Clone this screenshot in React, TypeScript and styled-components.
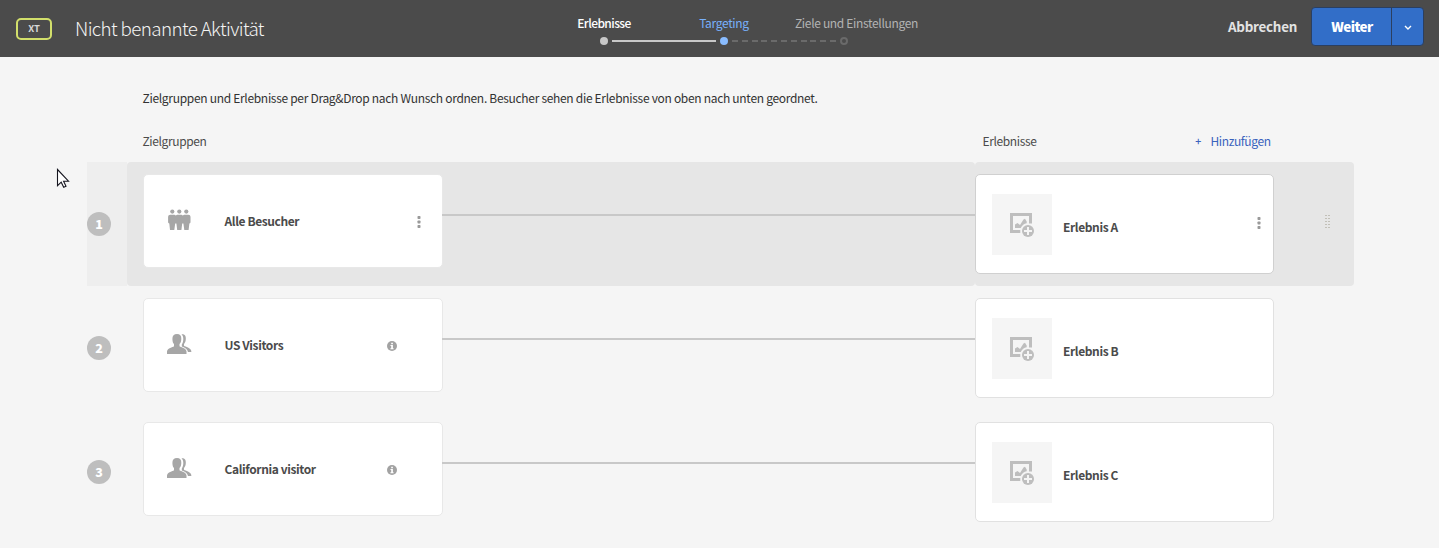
import React from "react";
import styled, { createGlobalStyle, css } from "styled-components";

const GlobalStyle = createGlobalStyle`
  * { box-sizing: border-box; }
  body {
    margin: 0;
    background: #f5f5f5;
    color: #4b4b4b;
    font-family: "Noto Sans CJK SC", "Noto Sans", sans-serif;
    font-size: 12px;
    letter-spacing: -0.31px;
    line-height: 18px;
    overflow: hidden;
  }
  button { font-family: inherit; }
`;

const Page = styled.div`
  position: relative;
  width: 1439px;
  height: 548px;
  overflow: hidden;
`;

const Header = styled.header`
  display: grid;
  grid-template-columns: 544px 360px 1fr;
  height: 57px;
  background: #4b4b4b;
`;

const TitleGroup = styled.div`
  display: flex;
  align-items: center;
  gap: 23px;
  padding-left: 16px;
`;

const TypeBadge = styled.span`
  width: 36px;
  height: 22px;
  border: 2px solid #d2df6b;
  border-radius: 5px;
  color: #d8d8d8;
  font-size: 9.5px;
  font-weight: 700;
  letter-spacing: 0;
  line-height: 17px;
  text-align: center;
`;

const Title = styled.h1`
  margin: 0;
  padding-bottom: 2px;
  color: #f4f4f4;
  font-size: 18.8px;
  font-weight: 300;
  letter-spacing: -0.62px;
  line-height: 28px;
  white-space: nowrap;
`;

const Steps = styled.ol`
  display: flex;
  margin: 0;
  padding: 14px 0 0;
  list-style: none;
`;

type StepState = "done" | "current" | "open";

const Step = styled.li<{ $state: StepState }>`
  display: flex;
  flex-direction: column;
  align-items: center;
  width: 120px;
  white-space: nowrap;
  color: ${({ $state }) =>
    $state === "done" ? "#fff" : $state === "current" ? "#78b0fb" : "#b3b3b3"};
  font-weight: ${({ $state }) => ($state === "done" ? 500 : 400)};
  letter-spacing: ${({ $state }) => ($state === "done" ? "-0.58px" : "-0.33px")};
`;

const StepLabel = styled.span<{ $state: StepState }>`
  margin-left: ${({ $state }) => ($state === "open" ? "25px" : "0")};
`;

const Track = styled.div`
  display: grid;
  grid-template-columns: 52px 8px 8px 52px;
  align-items: center;
  width: 120px;
  height: 8px;
  margin-top: 5px;
`;

const Dot = styled.span<{ $state: StepState }>`
  grid-column: 2;
  width: 8px;
  height: 8px;
  margin-left: 4px;
  border-radius: 50%;
  ${({ $state }) =>
    $state === "open"
      ? css`border: 2px solid #6a6a6a;`
      : css`background: ${$state === "current" ? "#89bcff" : "#c8c8c8"};`}
`;

const Bar = styled.span<{ $dashed?: boolean }>`
  grid-column: 4;
  width: 104px;
  height: 2px;
  background: ${({ $dashed }) =>
    $dashed ? "repeating-linear-gradient(90deg, #6a6a6a 0 6px, transparent 6px 9.8px)" : "#c8c8c8"};
`;

const Actions = styled.div`
  display: flex;
  align-items: flex-start;
  justify-content: flex-end;
  padding: 7px 15px 0 0;
`;

const CancelButton = styled.button`
  height: 38px;
  padding: 0;
  margin-right: 14px;
  border: 0;
  background: none;
  color: #e3e3e3;
  font-size: 13.4px;
  font-weight: 700;
  letter-spacing: -0.25px;
`;

const SplitButton = styled.div`
  display: flex;
  width: 113px;
  height: 39px;
  border: 1px solid #2b3f60;
  border-radius: 4px;
  background: #326ec8;
  overflow: hidden;
`;

const PrimaryButton = styled.button`
  width: 79px;
  padding: 0 0 1px 1px;
  border: 0;
  background: none;
  color: #fff;
  font-size: 13.4px;
  font-weight: 900;
  letter-spacing: -0.5px;
`;

const MoreButton = styled.button`
  display: flex;
  flex: 1;
  align-items: center;
  justify-content: center;
  padding: 2px 0 0;
  border: 0;
  border-left: 1px solid #2b3f60;
  background: none;
`;

const Hint = styled.p`
  margin: 0;
  padding: 32px 0 0 142.5px;
  color: #323232;
  letter-spacing: -0.305px;
`;

const ColumnHeads = styled.div`
  display: grid;
  grid-template-columns: 840px 212px auto;
  justify-content: start;
  padding: 25px 0 0 142.5px;
  height: 55px;
  letter-spacing: -0.38px;
`;

const AddLink = styled.a`
  display: flex;
  gap: 9px;
  color: #3a63bd;
`;

const Plus = styled.span`
  width: 7px;
  font-size: 10.5px;
  font-weight: 500;
  text-align: center;
`;

const Row = styled.section`
  display: grid;
  grid-template-columns: 40px 848px 379px;
  height: 124px;
  margin-left: 87px;
`;

const Rank = styled.div<{ $active?: boolean }>`
  padding-top: 50px;
  background: ${({ $active }) => ($active ? "#eeeeee" : "transparent")};
`;

const RankNumber = styled.span`
  display: block;
  width: 24px;
  height: 24px;
  border-radius: 50%;
  background: #bebebe;
  color: #fff;
  font-weight: 900;
  font-size: 12.5px;
  letter-spacing: 0;
  line-height: 24px;
  text-align: center;
`;

const AudienceCell = styled.div<{ $active?: boolean }>`
  display: flex;
  padding: 12px 0 0 16px;
  border-radius: 4px;
  background: ${({ $active }) => ($active ? "#e6e6e6" : "transparent")};
`;

const ExperienceCell = styled(AudienceCell)`
  padding-left: 0;
`;

const AudienceCard = styled.article`
  display: grid;
  grid-template-columns: 80.5px 1fr 20px;
  align-items: center;
  width: 300px;
  height: 94px;
  padding: 0 13px 0 0;
  border: 1px solid #e8e8e8;
  border-radius: 5px;
  background: #fff;
`;

const AudienceIcon = styled.span`
  display: flex;
  padding: 0 0 3px 23px;
`;

const Name = styled.strong`
  color: #4b4b4b;
  font-weight: 700;
  font-size: 12px;
  letter-spacing: -0.4px;
  white-space: nowrap;
`;

const CardAction = styled.span<{ $info?: boolean }>`
  display: flex;
  justify-content: center;
  margin-left: ${({ $info }) => ($info ? "-55px" : "0")};
  padding-top: 2px;
`;

const Connector = styled.div`
  flex: 1;
  height: 2px;
  margin-top: 40px;
  margin-left: -1px;
  background: #c8c8c8;
`;

const ExperienceCard = styled.article<{ $active?: boolean }>`
  display: grid;
  grid-template-columns: 60px 1fr 8px;
  align-items: center;
  width: 299px;
  height: 100px;
  padding: 0 8px 0 16px;
  border: 1px solid ${({ $active }) => ($active ? "#d0d0d0" : "#e1e1e1")};
  border-radius: 5px;
  background: #fff;
`;

const ExperienceAction = styled.span`
  display: flex;
  padding-bottom: 2px;
`;

const Thumb = styled.div`
  display: flex;
  align-items: center;
  justify-content: center;
  width: 60px;
  height: 61px;
  padding-top: 1px;
  background: #f5f5f5;
`;

const ExperienceName = styled(Name)`
  padding: 6px 0 0 11px;
`;

const Handle = styled.span`
  display: grid;
  grid-template-columns: 2px 2px;
  grid-auto-rows: 1px;
  gap: 2px 1px;
  align-content: start;
  margin: 41px 0 0 51px;
`;

const HandleDot = styled.i`
  background: #c2c0b8;
`;

const Pointer = styled.svg`
  position: absolute;
  left: 56px;
  top: 168px;
`;

const Dots = () => (
  <svg width="4" height="14" viewBox="0 0 4 14" fill="#9a9a9a">
    <rect x=".5" y="1" width="3" height="3" rx=".7" />
    <rect x=".5" y="5.5" width="3" height="3" rx=".7" />
    <rect x=".5" y="10" width="3" height="3" rx=".7" />
  </svg>
);

const InfoIcon = () => (
  <svg width="10" height="10" viewBox="0 0 10 10">
    <circle cx="5" cy="5" r="5" fill="#a2a2a2" />
    <path d="M4.2 1.7h1.7v1.5H4.2zM3.5 4h2.4v3.2h.7v1H3.4v-1h.8V5h-.7z" fill="#fff" />
  </svg>
);

const CrowdIcon = () => (
  <svg width="24" height="22" viewBox="0 0 24 22" fill="#a6a6a6">
    <circle cx="5.300" cy="2.600" r="2.100" />
    <circle cx="12.300" cy="2.600" r="2.100" />
    <circle cx="19.300" cy="2.600" r="2.100" />
    <path d="M3.300 5.800h4.200l1.300.7 1.300-.7h4.400l1.300.7 1.300-.7h4.200q2.200 0 2.200 2v5.500q0 1-1.100 1.200L21.600 21h-4.300l-.9-6.500h-1.200L14.400 21h-4.200l-.8-6.500H8.200L7.300 21H3L2.300 14.500q-1.200-.2-1.200-1.200V7.800q0-2 2.200-2z" />
  </svg>
);

const PeopleIcon = () => (
  <svg width="25" height="20" viewBox="0 0 25 20" fill="#a6a6a6">
    <path d="M10 0C13 0 14.500 1.900 14.300 4.900C14.200 7.500 13.500 9 12.500 10v2.200c1.500 1.100 6.500 1.600 7 5.200V20H0v-2.600c.5-3.600 5.700-4.100 7-5.200V10C6 9 5.500 7.500 5.400 4.900C5.300 1.900 7 0 10 0z" />
    <path d="M14.500.3C17.900.1 19 2 18.800 5c-.1 2.500-.8 3.900-1.800 5v1.700c1.500 1 6.800 2 7.300 5.200v1.200h-3.300c-.5-3-2.600-4.300-6.200-5.600v-2c1-1.500 1.500-3.200 1.500-5.500c0-2-.5-3.500-1.800-4.700z" />
  </svg>
);

const AddImageIcon = () => (
  <svg width="26" height="26" viewBox="0 0 26 26" fill="#bebebe">
    <path d="M1 1h22v10.500h-3V4H4v14h7.300v3H1z" />
    <path d="M6 16v-3.500L8.500 11l2.500 2 3.500-5.500 1.500-.8 1.700 2.800v1.700q-4 .8-6 4.800z" />
    <circle cx="19" cy="19" r="6" />
    <path d="M18 15h2v3h3v2h-3v3h-2v-3h-3v-2h3z" fill="#f5f5f5" />
  </svg>
);

const steps: { label: string; state: StepState }[] = [
  { label: "Erlebnisse", state: "done" },
  { label: "Targeting", state: "current" },
  { label: "Ziele und Einstellungen", state: "open" },
];

const rows = [
  { audience: "Alle Besucher", experience: "Erlebnis A", active: true },
  { audience: "US Visitors", experience: "Erlebnis B", active: false },
  { audience: "California visitor", experience: "Erlebnis C", active: false },
];

export default function App() {
  return (
    <Page>
      <GlobalStyle />
      <Header>
        <TitleGroup>
          <TypeBadge>XT</TypeBadge>
          <Title>Nicht benannte Aktivität</Title>
        </TitleGroup>
        <Steps>
          {steps.map(({ label, state }) => (
            <Step key={label} $state={state}>
              <StepLabel $state={state}>{label}</StepLabel>
              <Track>
                <Dot $state={state} />
                {state !== "open" && <Bar $dashed={state === "current"} />}
              </Track>
            </Step>
          ))}
        </Steps>
        <Actions>
          <CancelButton>Abbrechen</CancelButton>
          <SplitButton>
            <PrimaryButton>Weiter</PrimaryButton>
            <MoreButton aria-label="Mehr">
              <svg width="8" height="6" viewBox="0 0 8 6" fill="none" stroke="#fff" strokeWidth="1.4">
                <path d="M1 1l3 3 3-3" />
              </svg>
            </MoreButton>
          </SplitButton>
        </Actions>
      </Header>
      <main>
        <Hint>
          Zielgruppen und Erlebnisse per Drag&amp;Drop nach Wunsch ordnen. Besucher sehen die
          Erlebnisse von oben nach unten geordnet.
        </Hint>
        <ColumnHeads>
          <span>Zielgruppen</span>
          <span>Erlebnisse</span>
          <AddLink>
            <Plus>+</Plus>
            <span>Hinzufügen</span>
          </AddLink>
        </ColumnHeads>
        {rows.map(({ audience, experience, active }, index) => (
          <Row key={audience}>
            <Rank $active={active}>
              <RankNumber>{index + 1}</RankNumber>
            </Rank>
            <AudienceCell $active={active}>
              <AudienceCard>
                <AudienceIcon>{active ? <CrowdIcon /> : <PeopleIcon />}</AudienceIcon>
                <Name>{audience}</Name>
                <CardAction $info={!active}>{active ? <Dots /> : <InfoIcon />}</CardAction>
              </AudienceCard>
              <Connector />
            </AudienceCell>
            <ExperienceCell $active={active}>
              <ExperienceCard $active={active}>
                <Thumb>
                  <AddImageIcon />
                </Thumb>
                <ExperienceName>{experience}</ExperienceName>
                {active && (
                  <ExperienceAction>
                    <Dots />
                  </ExperienceAction>
                )}
              </ExperienceCard>
              {active && (
                <Handle>
                  {Array.from({ length: 10 }, (_, dot) => (
                    <HandleDot key={dot} />
                  ))}
                </Handle>
              )}
            </ExperienceCell>
          </Row>
        ))}
      </main>
      <Pointer width="14" height="21" viewBox="0 0 14 21">
        <path
          d="M1.500 1.500v16.200l3.700-3.500 2.500 5 2.300-1-2.400-5h4.900z"
          fill="#fff"
          stroke="#15151f"
          strokeWidth="1.100"
        />
      </Pointer>
    </Page>
  );
}
